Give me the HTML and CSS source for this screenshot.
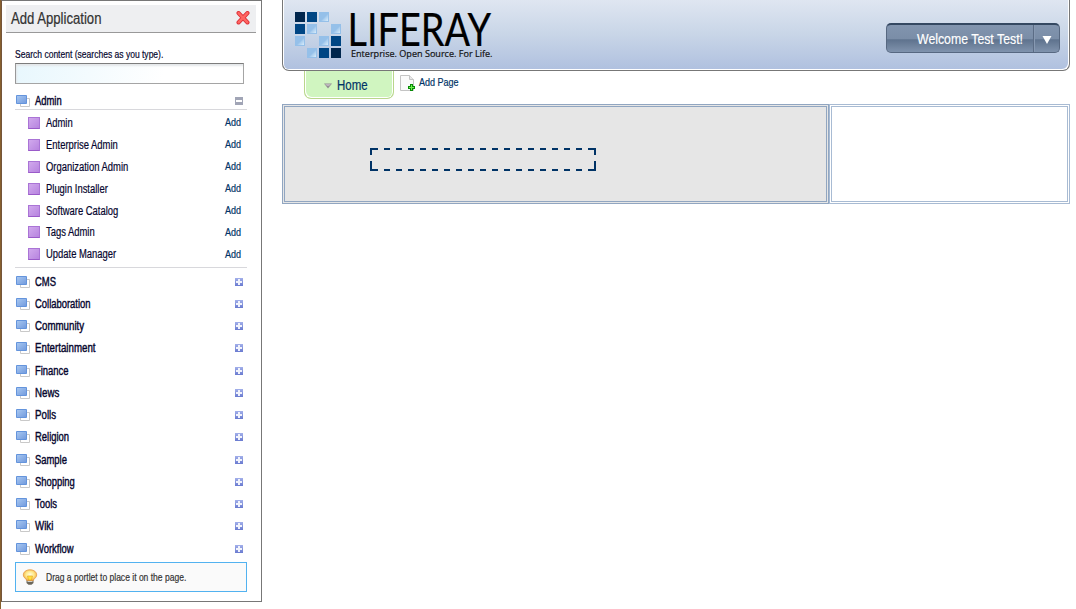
FILE: index.html
```html
<!DOCTYPE html>
<html lang="en">
<head>
<meta charset="utf-8">
<title>Liferay</title>
<link rel="stylesheet" href="styles.css">
</head>
<body>
<svg class="defs" width="0" height="0">
  <defs>
    <linearGradient id="blue" x1="0" y1="0" x2="1" y2="1"><stop offset="0" stop-color="#a9c9f2"/><stop offset="1" stop-color="#7199dc"/></linearGradient>
    <linearGradient id="plusbg" x1="0" y1="0" x2="0" y2="1"><stop offset="0" stop-color="#a3b0ea"/><stop offset="1" stop-color="#6a7bd0"/></linearGradient>
    <linearGradient id="shine" x1="0" y1="0" x2="1" y2="1"><stop offset=".4" stop-color="#95c0e9"/><stop offset="1" stop-color="#d9edfb"/></linearGradient>
    <radialGradient id="glow" cx=".5" cy=".45" r=".55"><stop offset="0" stop-color="#fffce0"/><stop offset=".55" stop-color="#ffe98a"/><stop offset="1" stop-color="#f3ae45"/></radialGradient>
    <symbol id="tile" viewBox="0 0 10 10"><path d="M0 0h10v10H0z" fill="#95c0e9"/><path d="M9 2v7H2z" fill="url(#shine)"/></symbol>
    <symbol id="folder" viewBox="0 0 14 12"><path d="M4.5 3.5h9v8h-9z" fill="#fff" stroke="#c9c9c9"/><path d="M.5.5h10v8H.5z" fill="url(#blue)" stroke="#6494dc"/></symbol>
    <symbol id="plus" viewBox="0 0 8 8"><path d="M0 0h8v8H0z" fill="url(#plusbg)"/><path d="M3 1h2v2h2v2H5v2H3V5H1V3h2z" fill="#f1f3fc"/></symbol>
    <symbol id="minus" viewBox="0 0 8 8"><path d="M0 0h8v8H0z" fill="#a1a5b6"/><path d="M1 3h6v2H1z" fill="#fff"/></symbol>
  </defs>
</svg>
<div class="page">
  <aside class="panel">
    <header class="panel-head">
      <h1 class="panel-title narrow">Add Application</h1>
      <svg class="close" width="14" height="14" viewBox="0 0 14 14"><path d="M2.500 2l9 9.500M11.500 2l-9 9.500" stroke="#dc3038" stroke-width="4" stroke-linecap="round"/><path d="M2.600 2.100l8.800 9.200M11.400 2.100l-8.800 9.200" stroke="#ff6662" stroke-width="2.400" stroke-linecap="round"/></svg>
    </header>
    <div class="panel-body">
      <label class="search-label narrow" for="search">Search content (searches as you type).</label>
      <input class="search" id="search" type="text">
      <div class="category open"><svg class="folder"><use href="#folder"/></svg><span class="narrow">Admin</span><svg class="toggle"><use href="#minus"/></svg></div>
      <ul class="apps">
        <li><i></i><span class="narrow">Admin</span><a class="narrow">Add</a></li>
        <li><i></i><span class="narrow">Enterprise Admin</span><a class="narrow">Add</a></li>
        <li><i></i><span class="narrow">Organization Admin</span><a class="narrow">Add</a></li>
        <li><i></i><span class="narrow">Plugin Installer</span><a class="narrow">Add</a></li>
        <li><i></i><span class="narrow">Software Catalog</span><a class="narrow">Add</a></li>
        <li><i></i><span class="narrow">Tags Admin</span><a class="narrow">Add</a></li>
        <li><i></i><span class="narrow">Update Manager</span><a class="narrow">Add</a></li>
      </ul>
      <div class="categories">
        <div class="category"><svg class="folder"><use href="#folder"/></svg><span class="narrow">CMS</span><svg class="toggle"><use href="#plus"/></svg></div>
        <div class="category"><svg class="folder"><use href="#folder"/></svg><span class="narrow">Collaboration</span><svg class="toggle"><use href="#plus"/></svg></div>
        <div class="category"><svg class="folder"><use href="#folder"/></svg><span class="narrow wide">Community</span><svg class="toggle"><use href="#plus"/></svg></div>
        <div class="category"><svg class="folder"><use href="#folder"/></svg><span class="narrow wide">Entertainment</span><svg class="toggle"><use href="#plus"/></svg></div>
        <div class="category"><svg class="folder"><use href="#folder"/></svg><span class="narrow">Finance</span><svg class="toggle"><use href="#plus"/></svg></div>
        <div class="category"><svg class="folder"><use href="#folder"/></svg><span class="narrow wide">News</span><svg class="toggle"><use href="#plus"/></svg></div>
        <div class="category"><svg class="folder"><use href="#folder"/></svg><span class="narrow wide">Polls</span><svg class="toggle"><use href="#plus"/></svg></div>
        <div class="category"><svg class="folder"><use href="#folder"/></svg><span class="narrow">Religion</span><svg class="toggle"><use href="#plus"/></svg></div>
        <div class="category"><svg class="folder"><use href="#folder"/></svg><span class="narrow">Sample</span><svg class="toggle"><use href="#plus"/></svg></div>
        <div class="category"><svg class="folder"><use href="#folder"/></svg><span class="narrow">Shopping</span><svg class="toggle"><use href="#plus"/></svg></div>
        <div class="category"><svg class="folder"><use href="#folder"/></svg><span class="narrow">Tools</span><svg class="toggle"><use href="#plus"/></svg></div>
        <div class="category"><svg class="folder"><use href="#folder"/></svg><span class="narrow wide">Wiki</span><svg class="toggle"><use href="#plus"/></svg></div>
        <div class="category"><svg class="folder"><use href="#folder"/></svg><span class="narrow">Workflow</span><svg class="toggle"><use href="#plus"/></svg></div>
      </div>
      <div class="tip">
        <svg width="16" height="16" viewBox="0 0 16 16"><path d="M4.500 10h7v4l-2 1.700h-3l-2-1.700z" fill="#6b665a"/><path d="M5.500 12.500h5" stroke="#d5d2c8"/><path d="M8 .8C3.800.8 1.300 3.200 1.300 6c0 2.600 2.700 3.400 3.500 5.500h6.400c.8-2.100 3.500-2.900 3.500-5.500C14.700 3.200 12.200.8 8 .8z" fill="url(#glow)" stroke="#e39a48" stroke-width=".8"/><path d="M5.500 7h5l-1 4h-3z" fill="#ffe03c" stroke="#e0a020" stroke-width=".6"/></svg>
        <span class="narrow">Drag a portlet to place it on the page.</span>
      </div>
    </div>
  </aside>
  <main class="main">
    <header class="banner">
      <svg class="logo" width="200" height="50" viewBox="0 0 200 50">
        <g fill="#00264d"><path d="M0 0h10v10H0zM36 36h10v10H36z"/></g>
        <g fill="#004684"><path d="M12 0h10v10H12zM0 12h10v10H0zM36 24h10v10H36zM24 36h10v10H24z"/></g>
        <use href="#tile" x="24" width="10" height="10"/><use href="#tile" x="12" y="12" width="10" height="10"/><use href="#tile" x="36" y="12" width="10" height="10"/><use href="#tile" y="24" width="10" height="10"/><use href="#tile" x="24" y="24" width="10" height="10"/><use href="#tile" x="12" y="36" width="10" height="10"/>
        <text class="brand" x="52.500" y="34" textLength="143.500" lengthAdjust="spacingAndGlyphs">LIFERAY</text>
        <text class="slogan" x="56" y="44.500" textLength="141.500" lengthAdjust="spacingAndGlyphs">Enterprise. Open Source. For Life.</text>
      </svg>
      <div class="user"><span class="narrow">Welcome Test Test!</span><b><svg width="10" height="8" viewBox="0 0 10 8"><path d="M.5 0h9L5 8z" fill="#fff"/></svg></b></div>
    </header>
    <nav class="tabs">
      <div class="tab"><svg width="8" height="6" viewBox="0 0 8 6"><path d="M0 .5h8L4 5.500z" fill="#918e91"/><path d="M1 1h6L5 3H3z" fill="#bbb4bb"/></svg><span class="narrow">Home</span></div>
      <div class="add-page">
        <svg width="16" height="17" viewBox="0 0 16 17"><path d="M.5.5h9l4 4v11H.5z" fill="#fafafa" stroke="#c4c4c4"/><path d="M9.500.5v4h4" fill="#e8e8e8" stroke="#c4c4c4"/><path d="M10 9h3v2h2v3h-2v2h-3v-2H8v-3h2z" fill="#078a07"/><path d="M11 10h1v2h2v1h-2v2h-1v-2H9v-1h2z" fill="#70f050"/></svg>
        <span class="narrow">Add Page</span>
      </div>
    </nav>
    <section class="columns">
      <div class="column target">
        <svg width="226" height="23" viewBox="0 0 226 23"><g fill="none" stroke="#003366" stroke-width="2"><path d="M8 1H1v6M1 13v9h7M218 1h7v6M225 13v9h-7"/><path d="M14 1h204M14 22h204" stroke-dasharray="6 6"/></g></svg>
      </div>
      <div class="column"></div>
    </section>
  </main>
</div>
</body>
</html>
```
FILE: styles.css
```css
* { box-sizing: border-box; }
body { margin: 0; background: #fff; color: #06062e; font-family: "Liberation Sans", Arial, sans-serif; }
svg { display: block; flex: none; }
.defs { position: absolute; }
.page { display: flex; height: 609px; overflow: hidden; border-left: 1px solid #87602f; }
.narrow { display: inline-block; white-space: nowrap; transform: scaleX(.82); transform-origin: 0 50%; -webkit-text-stroke: .2px currentColor; }

.panel { width: 261px; height: 602px; flex: none; border: 1px solid #777; border-left-color: #75553a; padding: 4px 5px 0 4px; }
.panel-head { display: flex; justify-content: space-between; align-items: center; height: 28px; width: 250px; padding: 0 6px 0 5px; background: #eeeff1; border-bottom: 1px solid #999; }
.panel-title { margin: 0; font-size: 16px; font-weight: 400; color: #333; }
.close { margin-bottom: 1px; }
.panel-body { padding: 14px 9px 0; }
.search-label { display: block; font-size: 11px; line-height: 14px; transform: scaleX(.775); }
.search { display: block; width: 229px; height: 21px; margin: 2px 0 7px; border: 1px solid #a5a5a5; border-top-color: #7c7c7c; border-left-color: #999; background: linear-gradient(100deg, #e8f7fd, #fff 65%); box-shadow: inset 1px 2px 2px #e4e7e9; }
.category { display: flex; align-items: center; height: 22.25px; width: 232px; padding: 0 4px 0 1px; font-size: 12px; }
.category .narrow, .apps .narrow { transform: scaleX(.785); }
.category .narrow { -webkit-text-stroke-width: .4px; }
.category .wide { transform: scaleX(.81); }
.category.open { height: 19px; padding-top: 2px; border-bottom: 1px solid #d8d8dc; }
.folder { width: 14px; height: 12px; margin-right: 5px; }
.toggle { width: 8px; height: 8px; margin-left: auto; }
.apps { list-style: none; width: 232px; height: 158px; margin: 0; padding: 2px 0 0 13px; border-bottom: 1px solid #d8d8dc; font-size: 12px; }
.apps li { display: flex; align-items: center; height: 21.92px; }
.apps i { width: 12px; height: 12px; margin-right: 6px; border: 1px solid #aa74d6; border-bottom-color: #9a5ac9; background: linear-gradient(135deg, #d1a9ed, #b784df); }
.apps a { width: 22px; margin: 0 0 1px auto; font-size: 11px; color: #003366; }
.apps a.narrow { transform: scaleX(.82); }
.categories { height: 292px; padding-top: 2.6px; }
.tip { display: flex; align-items: center; width: 232px; height: 30px; margin-top: 2px; padding-left: 6px; border: 1px solid #52b2f0; background: #fafafa; color: #333; font-size: 11px; }
.tip .narrow { margin-left: 8px; transform: scaleX(.775); }

.main { width: 788px; margin-left: 20px; }
.banner { display: flex; justify-content: space-between; width: 788px; height: 71px; padding: 12px 9px 0 11px; border: 1px solid #777; border-top: 0; border-radius: 0 0 7px 7px; background: linear-gradient(#dfe6f1, #c8d5e7 50%, #afc0df); box-shadow: inset 1px 0 #fff, inset -1px -1px #fff; }
.logo { margin-left: 1px; overflow: visible; }
.brand { font: 47px Lato, "Open Sans", sans-serif; fill: #000; stroke: #000; stroke-width: .2px; }
.slogan { font: 9.5px "Open Sans", "Noto Sans", sans-serif; fill: #111; stroke: #111; stroke-width: .2px; }
.user { display: flex; width: 174px; height: 30px; margin-top: 11px; padding-left: 30px; border: 1px solid #576881; border-top: 2px solid #344861; border-radius: 5px; background: linear-gradient(#8194ae, #7a8da7 53%, #5e728d 54%, #8093ad); color: #fff; font-size: 15px; line-height: 28px; }
.user .narrow { width: 116px; flex: none; }
.user b { display: flex; align-items: center; justify-content: center; width: 27px; padding-top: 2px; border-left: 1px solid #5b6c85; box-shadow: inset 1px 0 #8799b2; }
.tabs { display: flex; height: 33px; padding-left: 22px; }
.tab { display: flex; align-items: center; width: 90px; height: 28px; padding-left: 19px; border: 2px solid #b9d68c; border-width: 0 1px 1px; border-radius: 0 0 7px 7px; background: #d0f5c0; box-shadow: inset 1px -1px #fff, inset -1px 0 #fff; color: #003366; font-size: 14px; }
.tab svg { margin-top: 2px; }
.tab .narrow { margin-left: 5px; margin-top: 1px; }
.add-page { display: flex; align-items: flex-start; padding: 4px 0 0 6px; color: #003366; font-size: 11px; }
.add-page .narrow { margin: 1px 0 0 3px; }
.columns { display: flex; height: 100px; width: 788px; }
.column { flex: 1; border: 3px double #a8bbd3; }
.column.target { flex: none; width: 547px; padding: 41px 0 0 85px; background: #e6e6e6; border-color: #91a6c1; }
```
